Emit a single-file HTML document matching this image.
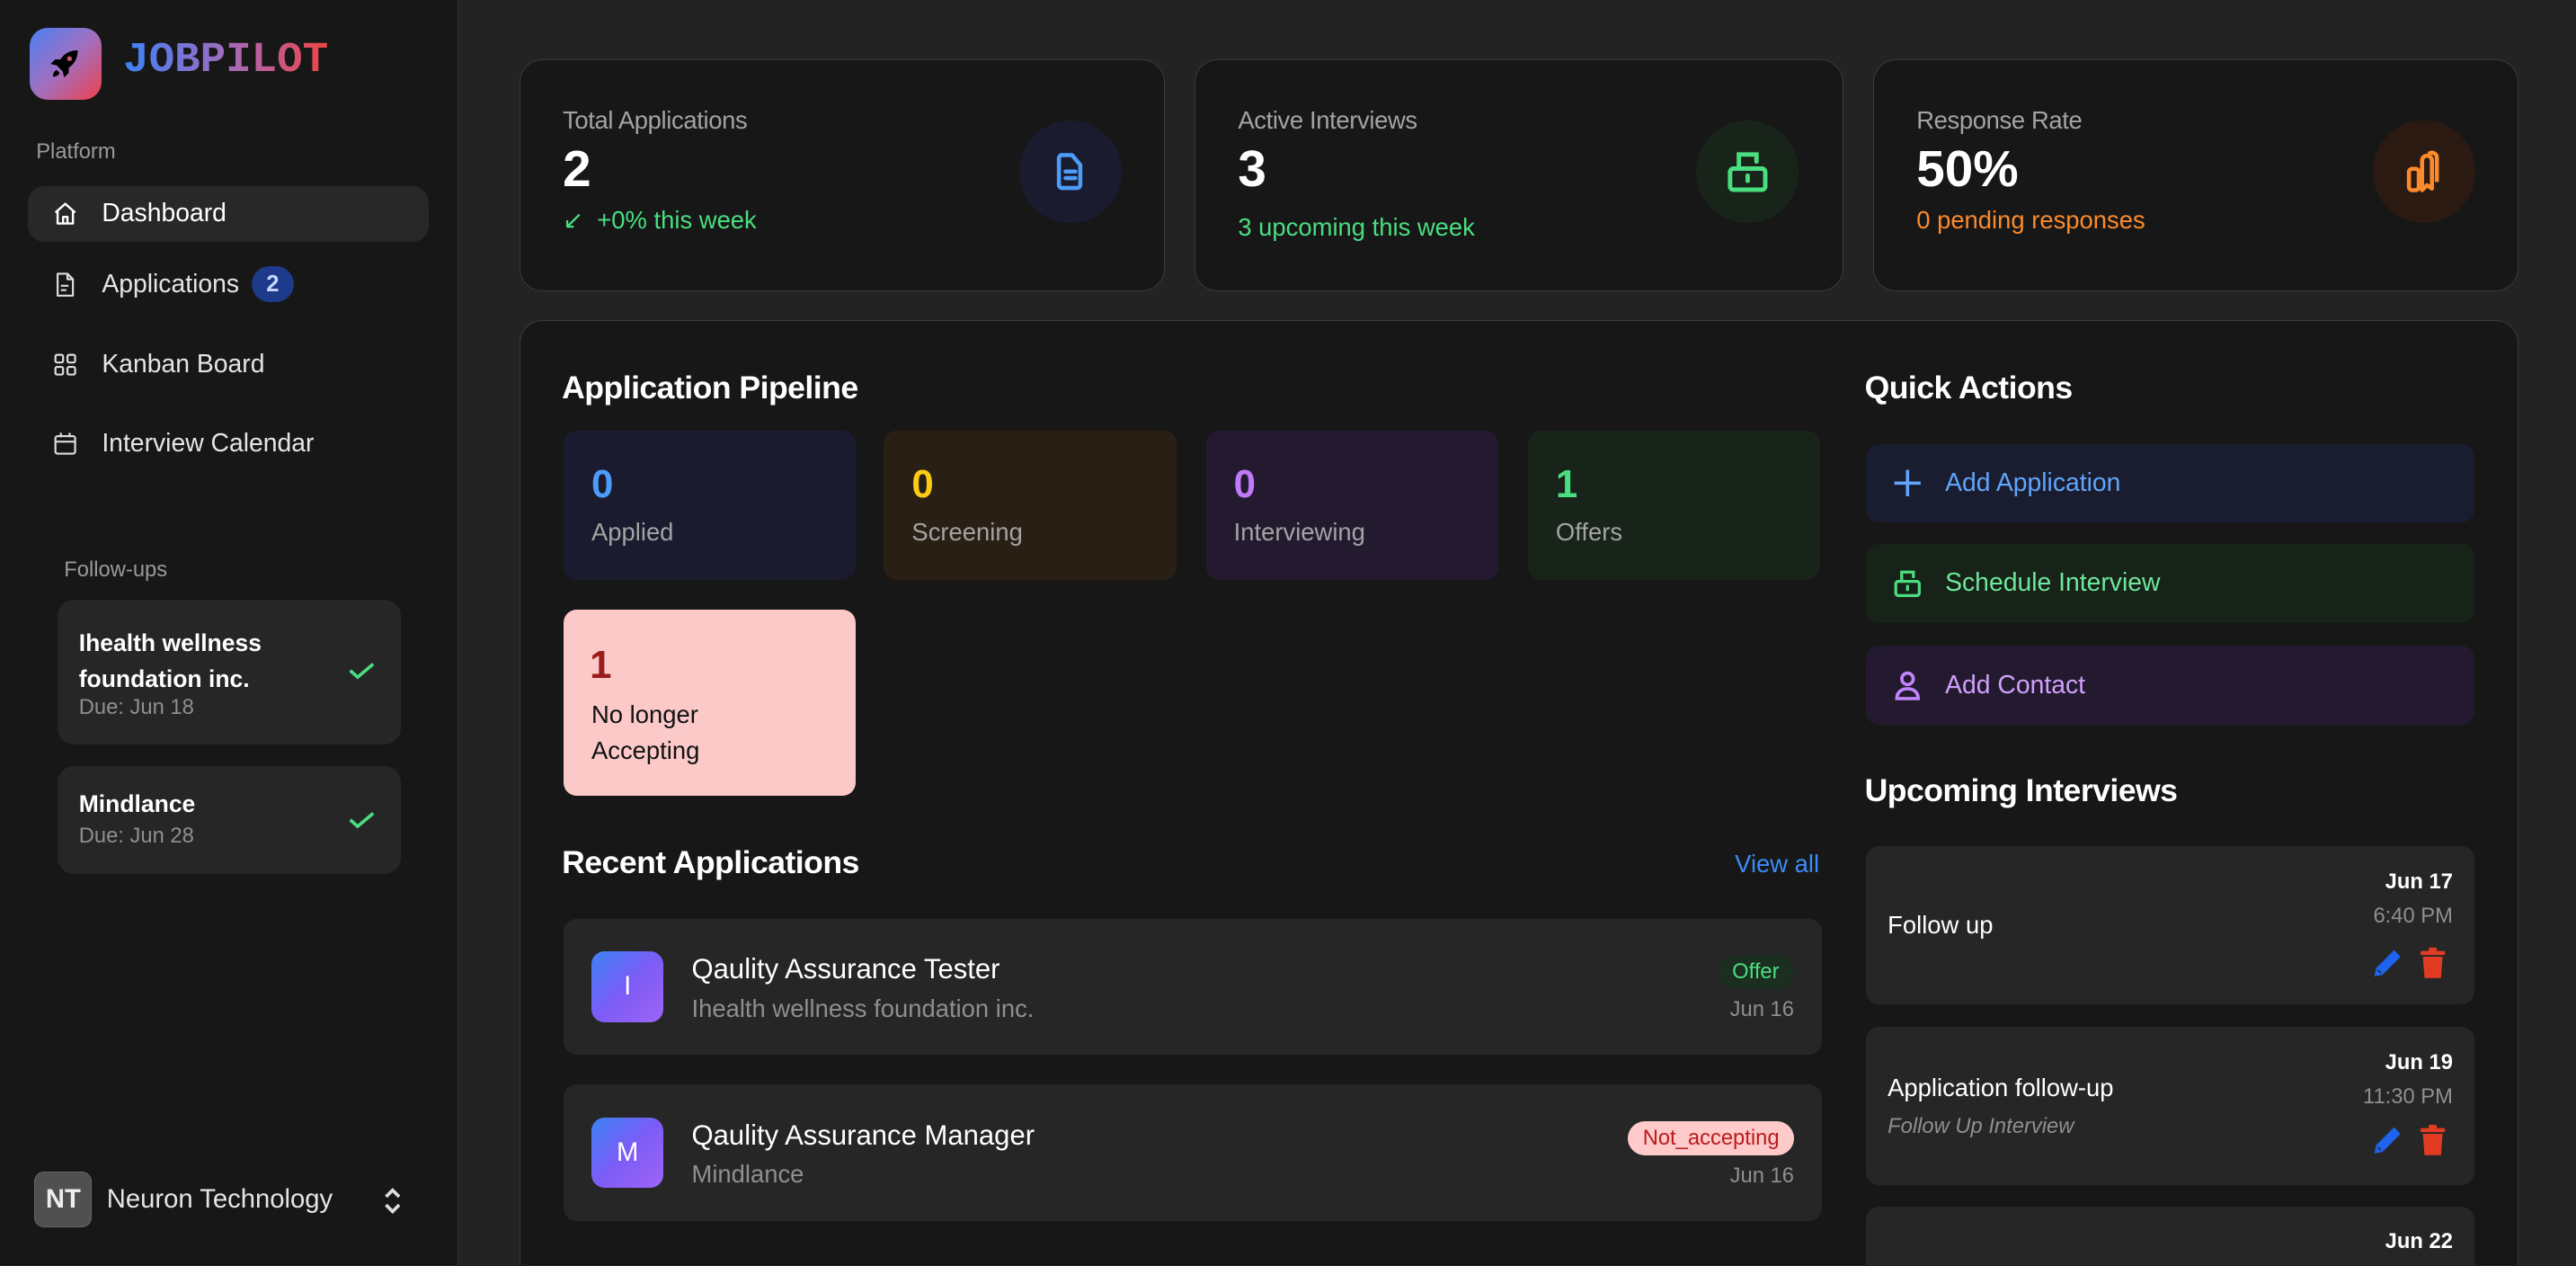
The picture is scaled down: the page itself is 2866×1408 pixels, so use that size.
<!DOCTYPE html>
<html><head><meta charset="utf-8">
<style>
*{margin:0;padding:0;box-sizing:border-box}
html,body{width:2866px;height:1408px;overflow:hidden;background:#232323}
#w{zoom:1.82781;width:1568px;height:770px;position:relative;background:#232323;font-family:"Liberation Sans",sans-serif;color:#fff;overflow:hidden}
.a{position:absolute}
.side{left:0;top:0;width:279px;height:770px;background:#171717;border-right:1px solid #2e2e2e}
.nav{left:17px;width:244px;height:34px;border-radius:10px;display:flex;align-items:center;font-size:15.5px;color:#e5e5e5}
.nav svg{position:absolute;left:15px}
.nav span{position:absolute;left:45px}
.fu{left:35px;width:209px;background:#262626;border-radius:10px}
.card{top:36px;height:141px;background:#171717;border:1px solid #3a3a3a;border-radius:14px}
.lbl{font-size:15px;color:#a3a3a3;letter-spacing:-0.2px}
.val{font-size:31px;font-weight:bold;color:#fff}
.circ{width:62px;height:62px;border-radius:50%;display:flex;align-items:center;justify-content:center}
.pp{top:262px;width:178px;height:91px;border-radius:8px}
.pp .n{position:absolute;left:17px;top:19px;font-size:24px;font-weight:bold}
.pp .t{position:absolute;left:17px;top:53px;font-size:15px;color:#a3a3a3}
.h{font-size:19.5px;font-weight:bold;color:#fff;letter-spacing:-0.3px}
.row{left:343px;width:766px;height:83px;background:#262626;border-radius:8px}
.av{position:absolute;left:17px;top:20px;width:44px;height:43px;border-radius:8px;background:linear-gradient(135deg,#3b82f6,#7c5cf6 50%,#a064f7);display:flex;align-items:center;justify-content:center;font-size:16px}
.qa{left:1136px;width:370px;height:48px;border-radius:8px;font-size:15.5px;display:flex;align-items:center}
.qa svg{position:absolute;left:15px}
.qa span{position:absolute;left:48px}
.iv{left:1136px;width:370px;background:#262626;border-radius:8px}
.r{position:absolute;right:13px;text-align:right}
</style></head><body><div id="w">
<div class="a side">
 <div class="a" style="left:18px;top:17px;width:44px;height:44px;border-radius:11px;background:linear-gradient(135deg,#4b7ff5,#a070c0 50%,#f0404c)">
  <svg class="a" style="left:11px;top:11px" width="22" height="22" viewBox="0 0 24 24"><path d="M20 3c-5 0-9 2-11.5 6H5l-3 3 4 1 4 4 1 4 3-3v-3.5C18 12 20 8 20 3z" fill="#000"/><circle cx="14.5" cy="8.5" r="1.6" fill="#d0567a"/><path d="M6 16c-2 1-2.5 3-2.5 4.5C5 20.5 7 20 8 18z" fill="#000"/></svg>
 </div>
 <div class="a" style="left:75px;top:22px;font-family:'Liberation Mono',monospace;font-weight:bold;font-size:26px;letter-spacing:0px;background:linear-gradient(90deg,#3b82f6,#a06cc0 50%,#ef4444);-webkit-background-clip:text;background-clip:text;color:transparent">JOBPILOT</div>
 <div class="a" style="left:22px;top:85px;font-size:13px;color:#9a9a9a">Platform</div>
 <div class="a nav" style="top:113px;background:#282828;color:#fff"><svg width="16" height="16" viewBox="0 0 24 24" fill="none" stroke="#fff" stroke-width="2" stroke-linejoin="round"><path d="M3 11l9-8 9 8M5 9.5V21h14V9.5M10 21v-6h4v6"/></svg><span>Dashboard</span></div>
 <div class="a nav" style="top:156px"><svg width="16" height="16" viewBox="0 0 24 24" fill="none" stroke="#ddd" stroke-width="1.8" stroke-linejoin="round"><path d="M5 2h9l5 5v15H5z M14 2v5h5M8 17h5M8 13h7"/></svg><span>Applications</span><div class="a" style="left:136px;top:6px;width:26px;height:22px;border-radius:11px;background:#1e3a8a;color:#c7d7fe;font-size:14px;font-weight:bold;display:flex;align-items:center;justify-content:center">2</div></div>
 <div class="a nav" style="top:205px"><svg width="16" height="16" viewBox="0 0 24 24" fill="none" stroke="#ddd" stroke-width="1.8"><rect x="3" y="3" width="7" height="7" rx="1.5"/><rect x="14" y="3" width="7" height="7" rx="1.5"/><rect x="3" y="14" width="7" height="7" rx="1.5"/><rect x="14" y="14" width="7" height="7" rx="1.5"/></svg><span>Kanban Board</span></div>
 <div class="a nav" style="top:253px"><svg width="16" height="16" viewBox="0 0 24 24" fill="none" stroke="#ddd" stroke-width="1.8"><rect x="3" y="5" width="18" height="16" rx="2"/><path d="M3 10h18M8 2v4M16 2v4"/></svg><span>Interview Calendar</span></div>
 <div class="a" style="left:39px;top:339px;font-size:13px;color:#9a9a9a">Follow-ups</div>
 <div class="a fu" style="top:365px;height:88px">
  <div class="a" style="left:13px;top:15px;font-size:14.5px;font-weight:bold;line-height:22px;color:#fff">Ihealth wellness<br>foundation inc.</div>
  <div class="a" style="left:13px;top:58px;font-size:13px;color:#8f8f8f">Due: Jun 18</div>
  <svg class="a" style="left:176px;top:36px" width="18" height="14" viewBox="0 0 18 14" fill="none" stroke="#4ade80" stroke-width="2"><path d="M2 7l4.5 4L16 3"/></svg>
 </div>
 <div class="a fu" style="top:466px;height:66px">
  <div class="a" style="left:13px;top:15px;font-size:14.5px;font-weight:bold;color:#fff">Mindlance</div>
  <div class="a" style="left:13px;top:35px;font-size:13px;color:#8f8f8f">Due: Jun 28</div>
  <svg class="a" style="left:176px;top:26px" width="18" height="14" viewBox="0 0 18 14" fill="none" stroke="#4ade80" stroke-width="2"><path d="M2 7l4.5 4L16 3"/></svg>
 </div>
 <div class="a" style="left:21px;top:713px;width:35px;height:34px;border-radius:6px;background:#505050;border:1px solid #666;font-size:16px;font-weight:bold;display:flex;align-items:center;justify-content:center;color:#eee">NT</div>
 <div class="a" style="left:65px;top:721px;font-size:16px;color:#e5e5e5">Neuron Technology</div>
 <svg class="a" style="left:232px;top:722px" width="14" height="17" viewBox="0 0 14 17" fill="none" stroke="#ddd" stroke-width="2"><path d="M3 6l4-4 4 4M3 11l4 4 4-4"/></svg>
</div>

<div class="a card" style="left:316px;width:393px">
 <div class="a lbl" style="left:26px;top:28px">Total Applications</div>
 <div class="a val" style="left:26px;top:49px">2</div>
 <div class="a" style="left:26px;top:89px;font-size:15px;color:#4ade80">↙&nbsp; +0% this week</div>
 <div class="a circ" style="left:304px;top:37px;background:#1a1b2e"><svg width="24" height="26" viewBox="0 0 24 26" fill="none" stroke="#4c9cf8" stroke-width="2.5" stroke-linecap="round" stroke-linejoin="round"><path d="M6 3h7l5 6v12a2 2 0 0 1-2 2H7a2 2 0 0 1-2-2V5a2 2 0 0 1 2-2z"/><path d="M9 13h6M9 17h6"/></svg></div>
</div>
<div class="a card" style="left:727px;width:395px">
 <div class="a lbl" style="left:26px;top:28px">Active Interviews</div>
 <div class="a val" style="left:26px;top:49px">3</div>
 <div class="a" style="left:26px;top:93px;font-size:15px;color:#4ade80">3 upcoming this week</div>
 <div class="a circ" style="left:305px;top:37px;background:#182419"><svg width="30" height="30" viewBox="0 0 28 28" fill="none" stroke="#4ade80" stroke-width="2.5" stroke-linecap="round"><path d="M9 12V4h10v4"/><rect x="4" y="12" width="20" height="12" rx="2"/><path d="M14 16v3"/></svg></div>
</div>
<div class="a card" style="left:1140px;width:393px">
 <div class="a lbl" style="left:26px;top:28px">Response Rate</div>
 <div class="a val" style="left:26px;top:49px">50%</div>
 <div class="a" style="left:26px;top:89px;font-size:15px;color:#fb8a2c">0 pending responses</div>
 <div class="a circ" style="left:304px;top:37px;background:#2b1a12"><svg width="28" height="30" viewBox="0 0 28 30" fill="none" stroke="#fb8a2c" stroke-width="2.5" stroke-linejoin="round"><rect x="5" y="13" width="6" height="13" rx="2"/><path d="M13 26V8a3 3 0 0 1 6 0v17l-3-2z"/><path d="M17 4a3 3 0 0 1 5 2v15"/></svg></div>
</div>

<div class="a" style="left:316px;top:195px;width:1217px;height:600px;background:#171717;border:1px solid #3a3a3a;border-radius:14px"></div>
<div class="a h" style="left:342px;top:225px">Application Pipeline</div>
<div class="a pp" style="left:343px;background:#1a1b2e"><div class="n" style="color:#4c9cf8">0</div><div class="t">Applied</div></div>
<div class="a pp" style="left:538px;background:#2a1f15"><div class="n" style="color:#facc15">0</div><div class="t">Screening</div></div>
<div class="a pp" style="left:734px;background:#241a30"><div class="n" style="color:#c17af8">0</div><div class="t">Interviewing</div></div>
<div class="a pp" style="left:930px;background:#18231a"><div class="n" style="color:#4ade80">1</div><div class="t">Offers</div></div>
<div class="a" style="left:343px;top:371px;width:178px;height:113px;border-radius:8px;background:#fcc9c9">
 <div class="a" style="left:16px;top:20px;font-size:24px;font-weight:bold;color:#9b1c1c">1</div>
 <div class="a" style="left:17px;top:53px;font-size:15px;line-height:22px;color:#111">No longer<br>Accepting</div>
</div>
<div class="a h" style="left:342px;top:514px">Recent Applications</div>
<div class="a" style="left:1056px;top:517px;font-size:15px;color:#3b8cf6">View all</div>
<div class="a row" style="top:559px">
 <div class="av">I</div>
 <div class="a" style="left:78px;top:21px;font-size:17px;color:#fff">Qaulity Assurance Tester</div>
 <div class="a" style="left:78px;top:46px;font-size:15px;color:#8f8f8f">Ihealth wellness foundation inc.</div>
 <div class="a" style="right:17px;top:22px;height:21px;padding:0 9px;border-radius:11px;background:#1c2e1f;color:#4ade80;font-size:13px;line-height:21px">Offer</div>
 <div class="a" style="right:17px;top:48px;font-size:13px;color:#8f8f8f">Jun 16</div>
</div>
<div class="a row" style="top:660px">
 <div class="av">M</div>
 <div class="a" style="left:78px;top:21px;font-size:17px;color:#fff">Qaulity Assurance Manager</div>
 <div class="a" style="left:78px;top:46px;font-size:15px;color:#8f8f8f">Mindlance</div>
 <div class="a" style="right:17px;top:22px;height:21px;padding:0 9px;border-radius:11px;background:#fecaca;color:#b91c1c;font-size:13px;line-height:21px">Not_accepting</div>
 <div class="a" style="right:17px;top:48px;font-size:13px;color:#8f8f8f">Jun 16</div>
</div>

<div class="a h" style="left:1135px;top:225px">Quick Actions</div>
<div class="a qa" style="top:270px;background:#1a1c30;color:#60a5fa"><svg width="20" height="20" viewBox="0 0 20 20" stroke="#60a5fa" stroke-width="2"><path d="M10 2v16M2 10h16"/></svg><span>Add Application</span></div>
<div class="a qa" style="top:331px;background:#172218;color:#6ee79a"><svg width="20" height="20" viewBox="0 0 28 28" fill="none" stroke="#4ade80" stroke-width="2.5" stroke-linecap="round"><path d="M9 12V4h10v4"/><rect x="4" y="12" width="20" height="12" rx="2"/><path d="M14 16v3"/></svg><span>Schedule Interview</span></div>
<div class="a qa" style="top:393px;background:#231a30;color:#d0a0fa"><svg width="20" height="20" viewBox="0 0 20 20" fill="none" stroke="#c084fc" stroke-width="2"><circle cx="10" cy="6" r="3.5"/><path d="M3.5 18c0-4 3-6 6.5-6s6.5 2 6.5 6z"/></svg><span>Add Contact</span></div>

<div class="a h" style="left:1135px;top:470px">Upcoming Interviews</div>
<div class="a iv" style="top:515px;height:96px">
 <div class="a" style="left:13px;top:39px;font-size:15px;color:#fff">Follow up</div>
 <div class="r" style="top:14px;font-size:13px;font-weight:bold;color:#fff">Jun 17</div>
 <div class="r" style="top:35px;font-size:13px;color:#8f8f8f">6:40 PM</div>
</div>
<div class="a iv" style="top:625px;height:96px">
 <div class="a" style="left:13px;top:28px;font-size:15px;color:#fff">Application follow-up</div>
 <div class="a" style="left:13px;top:53px;font-size:13px;font-style:italic;color:#8f8f8f">Follow Up Interview</div>
 <div class="r" style="top:14px;font-size:13px;font-weight:bold;color:#fff">Jun 19</div>
 <div class="r" style="top:35px;font-size:13px;color:#8f8f8f">11:30 PM</div>
</div>
<div class="a iv" style="top:734px;height:36px;border-radius:8px 8px 0 0">
 <div class="r" style="top:14px;font-size:13px;font-weight:bold;color:#fff">Jun 22</div>
</div>
<svg class="a" style="left:1443px;top:576px" width="20" height="20" viewBox="0 0 20 20"><path d="M14 2l4 4L7 17l-5 1 1-5z" fill="#1d63ed"/><path d="M4 14l2 2" stroke="#262626" stroke-width="0.8"/></svg>
<svg class="a" style="left:1473px;top:576px" width="16" height="20" viewBox="0 0 16 20"><rect x="0.5" y="2.5" width="15" height="2.5" rx="1" fill="#e23b24"/><rect x="5.5" y="0.5" width="5" height="3" rx="1" fill="#e23b24"/><path d="M2 6h12l-1 13H3z" fill="#e23b24"/></svg>
<svg class="a" style="left:1443px;top:684px" width="20" height="20" viewBox="0 0 20 20"><path d="M14 2l4 4L7 17l-5 1 1-5z" fill="#1d63ed"/><path d="M4 14l2 2" stroke="#262626" stroke-width="0.8"/></svg>
<svg class="a" style="left:1473px;top:684px" width="16" height="20" viewBox="0 0 16 20"><rect x="0.5" y="2.5" width="15" height="2.5" rx="1" fill="#e23b24"/><rect x="5.5" y="0.5" width="5" height="3" rx="1" fill="#e23b24"/><path d="M2 6h12l-1 13H3z" fill="#e23b24"/></svg>
</div></body></html>
